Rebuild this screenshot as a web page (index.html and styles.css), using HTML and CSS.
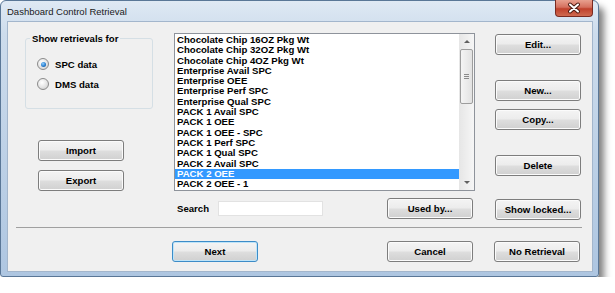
FILE: index.html
```html
<!DOCTYPE html>
<html lang="en">
<head>
    <meta charset="UTF-8">
    <title>Dashboard Control Retrieval</title>
    <link rel="stylesheet" href="styles.css">
</head>
<body>

    <div class="window">
        <div class="titlebar">
            <span class="title">Dashboard Control Retrieval</span>
            <span class="close-btn">
                <svg width="36" height="16" viewBox="0 0 36 16">
                    <path d="M14 4.5 L22 11.5 M22 4.5 L14 11.5" stroke="#4a1a12" stroke-width="4" stroke-linecap="round"/>
                    <path d="M14 4.5 L22 11.5 M22 4.5 L14 11.5" stroke="#fff" stroke-width="2" stroke-linecap="round"/>
                </svg>
            </span>
        </div>

        <div class="client">
            <div class="top">
                <!-- 左侧：数据类型 + 导入导出 -->
                <div class="left-col">
                    <fieldset class="group">
                        <legend>Show retrievals for</legend>
                        <div class="radio"><span class="radio-dot checked"></span>SPC data</div>
                        <div class="radio"><span class="radio-dot"></span>DMS data</div>
                    </fieldset>
                    <button class="btn btn-import">Import</button>
                    <button class="btn btn-export">Export</button>
                </div>

                <!-- 中间：列表 + 搜索 -->
                <div class="center-col">
                    <div class="listbox">
                        <ul class="items">
                            <li>Chocolate Chip 16OZ Pkg Wt</li>
                            <li>Chocolate Chip 32OZ Pkg Wt</li>
                            <li>Chocolate Chip 4OZ Pkg Wt</li>
                            <li>Enterprise Avail SPC</li>
                            <li>Enterprise OEE</li>
                            <li>Enterprise Perf SPC</li>
                            <li>Enterprise Qual SPC</li>
                            <li>PACK 1 Avail SPC</li>
                            <li>PACK 1 OEE</li>
                            <li>PACK 1 OEE - SPC</li>
                            <li>PACK 1 Perf SPC</li>
                            <li>PACK 1 Qual SPC</li>
                            <li>PACK 2 Avail SPC</li>
                            <li class="selected">PACK 2 OEE</li>
                            <li>PACK 2 OEE - 1</li>
                        </ul>
                        <div class="scrollbar">
                            <span class="arrow"><span class="tri-up"></span></span>
                            <span class="thumb"><span class="grip"></span></span>
                            <span class="track"></span>
                            <span class="arrow"><span class="tri-down"></span></span>
                        </div>
                    </div>
                    <div class="search-row">
                        <span class="search-label">Search</span>
                        <input type="text" class="search-input">
                        <button class="btn btn-usedby">Used by...</button>
                    </div>
                </div>

                <!-- 右侧按钮 -->
                <div class="right-col">
                    <button class="btn btn-edit">Edit...</button>
                    <button class="btn btn-new">New...</button>
                    <button class="btn btn-copy">Copy...</button>
                    <button class="btn btn-delete">Delete</button>
                    <button class="btn btn-locked">Show locked...</button>
                </div>
            </div>

            <div class="sep"></div>

            <div class="bottom">
                <button class="btn btn-default btn-next">Next</button>
                <button class="btn btn-cancel">Cancel</button>
                <button class="btn btn-noret">No Retrieval</button>
            </div>
        </div>
    </div>

</body>
</html>
```

FILE: styles.css
```css
body {
    margin: 0;
    padding: 0;
    background: #fff;
    font-family: "Liberation Sans", Arial, sans-serif;
}

.window {
    width: 599px;
    height: 277px;
    box-sizing: border-box;
    padding: 0 5px 4px 6px;
    border: 1px solid #5a7797;
    border-radius: 6px 6px 3px 3px;
    background: linear-gradient(180deg, #dfe9f4 0%, #cddcec 12%, #bcd0e6 60%, #aec6e1 100%);
    box-shadow: 5px 7px 7px rgba(0, 0, 0, 0.5);
}

.titlebar {
    height: 20px;
    display: flex;
    justify-content: space-between;
    align-items: flex-start;
}

.title {
    margin-top: 5px;
    font-size: 9.5px;
    line-height: 12px;
    color: #1a1a1a;
}

.close-btn {
    width: 36px;
    height: 16px;
    margin-top: -1px;
    border: 1px solid #7a2a20;
    border-top: none;
    border-radius: 0 0 4px 4px;
    background: linear-gradient(180deg, #e8a08f 0%, #d5705e 45%, #c0412c 55%, #cf6a50 100%);
    display: flex;
}

.client {
    width: 586px;
    height: 251px;
    box-sizing: border-box;
    background: #f0f0f0;
    border: 1px solid #a3b6cc;
    font-size: 9.6px;
    font-weight: bold;
    color: #000;
}

.top {
    height: 205px;
    box-sizing: border-box;
    padding: 11px 0 0 17px;
    display: flex;
}

/* 左侧 */
.left-col {
    width: 149px;
    display: flex;
    flex-direction: column;
}

.group {
    margin: 0;
    width: 128px;
    height: 76px;
    box-sizing: border-box;
    padding: 13px 0 0 11px;
    border: 1px solid #d5dfe5;
    border-radius: 3px;
}

.group legend {
    padding: 0 2px;
    margin-left: -7px;
    line-height: 11px;
}

.radio {
    height: 14px;
    display: flex;
    align-items: center;
    margin-bottom: 6px;
}

.radio-dot {
    width: 10px;
    height: 10px;
    margin-right: 6px;
    border: 1px solid #8a8a8a;
    border-radius: 50%;
    background: radial-gradient(circle at 40% 35%, #ffffff 0%, #e6e6e6 50%, #c8c8c8 100%);
    display: flex;
    align-items: center;
    justify-content: center;
}

.radio-dot.checked::after {
    content: "";
    width: 5px;
    height: 5px;
    border-radius: 50%;
    background: radial-gradient(circle at 40% 35%, #8fd0ff 0%, #2a7fd0 55%, #0d4a8a 100%);
}

.btn {
    width: 86px;
    height: 21px;
    padding: 0;
    border: 1px solid #7d7d7d;
    border-radius: 3px;
    background: linear-gradient(180deg, #f4f4f4 0%, #ececec 48%, #dedede 52%, #d0d0d0 100%);
    box-shadow: inset 0 0 0 1px #fbfbfb;
    font-family: inherit;
    font-size: 9.6px;
    font-weight: bold;
    color: #000;
}

.btn-import {
    margin: 31px 0 0 13px;
}

.btn-export {
    margin: 9px 0 0 13px;
}

/* 中间 */
.center-col {
    width: 301px;
    display: flex;
    flex-direction: column;
}

.listbox {
    height: 158px;
    box-sizing: border-box;
    border: 1px solid #8e939b;
    background: #fff;
    display: flex;
}

.items {
    flex: 1;
    list-style: none;
    margin: 0;
    padding: 1px 0 0;
    overflow: hidden;
}

.items li {
    height: 10.3px;
    line-height: 10.3px;
    padding-left: 2px;
    white-space: nowrap;
}

.items li.selected {
    background: #3399ff;
    color: #fff;
}

.scrollbar {
    width: 15px;
    display: flex;
    flex-direction: column;
    background: linear-gradient(90deg, #e6e6e6, #f6f6f6);
}

.arrow {
    height: 15px;
    display: flex;
    align-items: center;
    justify-content: center;
}

.tri-up {
    border-left: 3px solid transparent;
    border-right: 3px solid transparent;
    border-bottom: 3px solid #606060;
}

.tri-down {
    border-left: 3px solid transparent;
    border-right: 3px solid transparent;
    border-top: 3px solid #606060;
}

.thumb {
    height: 55px;
    margin: 0 1px;
    box-sizing: border-box;
    border: 1px solid #9d9d9d;
    border-radius: 2px;
    background: linear-gradient(90deg, #f4f4f4, #e2e2e2);
    display: flex;
    align-items: center;
    justify-content: center;
}

.grip {
    width: 5px;
    height: 5px;
    background: repeating-linear-gradient(180deg, #8a8a8a 0, #8a8a8a 1px, transparent 1px, transparent 2px);
}

.track {
    flex: 1;
}

.search-row {
    margin-top: 7px;
    height: 21px;
    padding-left: 3px;
    display: flex;
    align-items: center;
}

.search-label {
    width: 41px;
}

.search-input {
    width: 105px;
    height: 15px;
    box-sizing: border-box;
    border: 1px solid #e2e2e2;
    background: #fff;
    padding: 0;
}

.btn-usedby {
    margin: -1px 2px 0 auto;
}

/* 右侧 */
.right-col {
    margin-left: 20px;
    padding-top: 1px;
    display: flex;
    flex-direction: column;
}

.btn-new { margin-top: 25px; }
.btn-copy { margin-top: 8px; }
.btn-delete { margin-top: 25px; }
.btn-locked { margin-top: 23px; }

.sep {
    height: 1px;
    margin: 0 10px 0 8px;
    background: #a0a0a0;
}

.bottom {
    padding: 13px 0 0 164px;
    display: flex;
}

.btn-default {
    border-color: #3c8cc8;
    box-shadow: inset 0 0 0 1px #bfe4f8;
}

.btn-cancel {
    margin-left: 129px;
}

.btn-noret {
    margin-left: 21px;
}
```
